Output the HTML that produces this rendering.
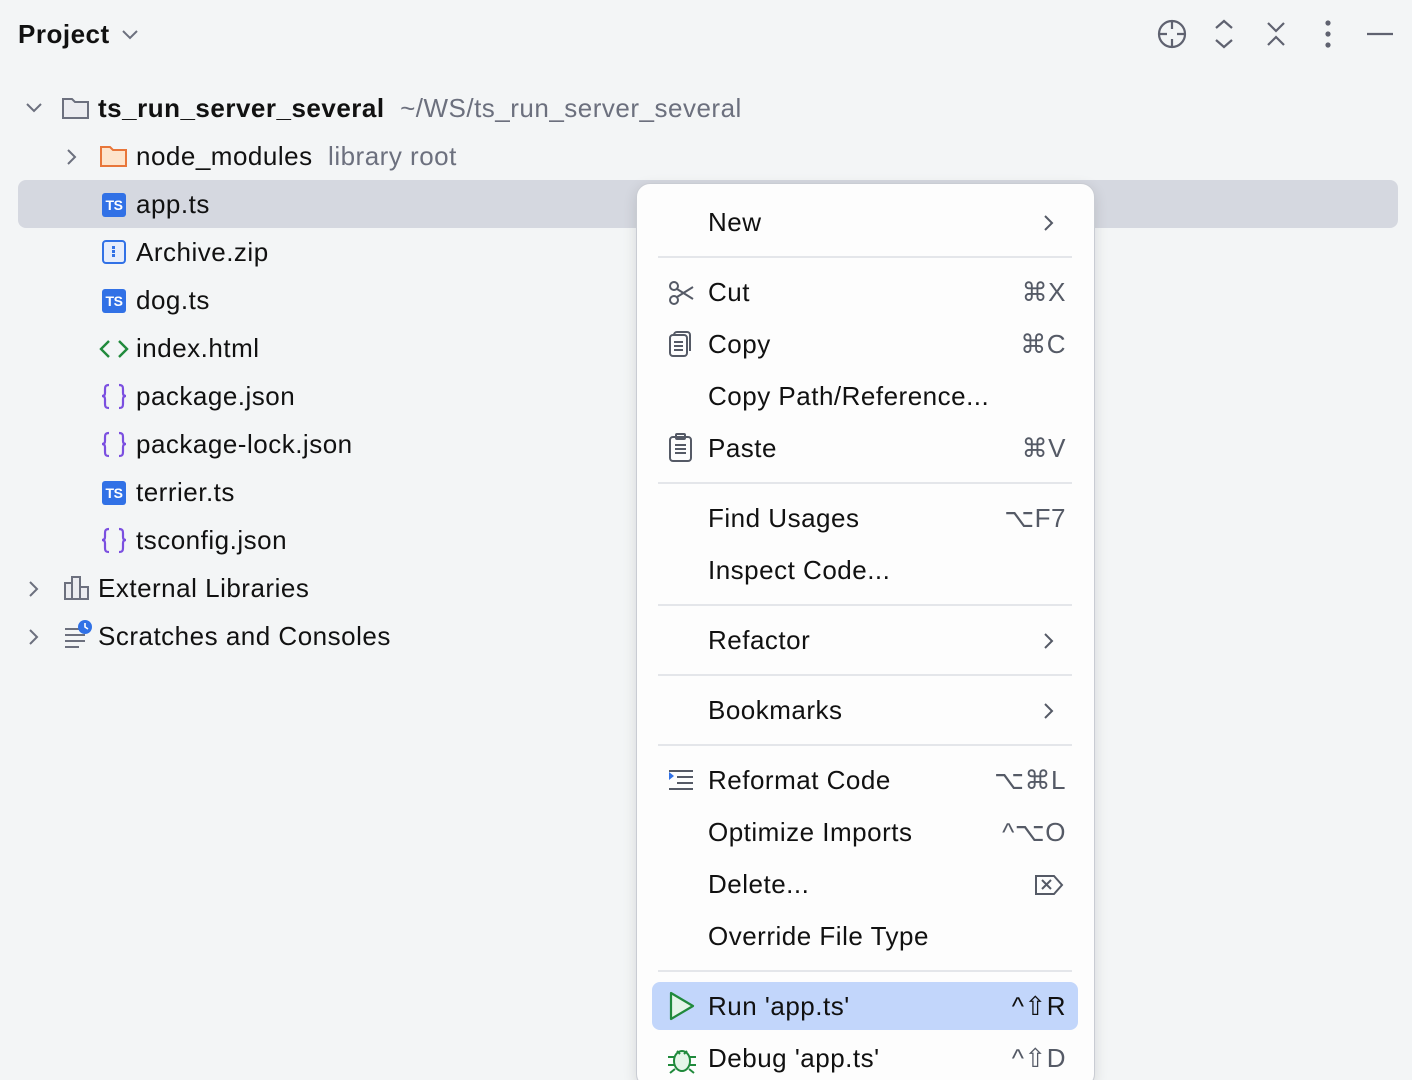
<!DOCTYPE html>
<html><head><meta charset="utf-8"><style>
*{margin:0;padding:0;box-sizing:border-box}
html,body{width:1412px;height:1080px;overflow:hidden}
body{background:#f3f5f6;font-family:"Liberation Sans",sans-serif;color:#111;position:relative;font-size:26px;letter-spacing:0.5px}
.a{position:absolute;white-space:nowrap}
.t{line-height:48px;height:48px}
.g{color:#6c707e}
.ts{position:absolute;width:24px;height:24px;background:#3171e6;border-radius:3px;color:#fff;font-size:14px;font-weight:bold;text-align:center;line-height:25px;letter-spacing:-0.5px}
.m{position:absolute;left:636px;top:183px;width:459px;height:905px;background:#fdfdfd;border:1px solid #c9ccd3;border-radius:14px;box-shadow:0 4px 14px rgba(0,0,0,.12)}
.mi{position:absolute;left:708px;line-height:52px;height:52px;white-space:nowrap}
.sc{position:absolute;right:346px;line-height:52px;color:#555a66;white-space:nowrap;text-align:right}
.sep{position:absolute;left:658px;width:414px;height:2px;background:#e4e6ea}
</style></head><body>
<div class="a" style="left:18px;top:14px;font-weight:bold;font-size:26px;line-height:40px">Project</div>
<svg class="a" style="left:120px;top:26px" width="20" height="16"><path d="M3 5l7 7 7-7" fill="none" stroke="#6c707e" stroke-width="2"/></svg>
<svg class="a" style="left:1150px;top:12px" width="250" height="46" fill="none" stroke="#5f6270" stroke-width="2.2">
<circle cx="22" cy="22" r="13"/><path d="M22 9v8M22 27v8M9 22h8M27 22h8"/>
<path d="M66 16l8-7 8 7M66 28l8 7 8-7"/>
<path d="M118 11l8 8 8-8M118 33l8-8 8 8"/>
<circle cx="178" cy="11" r="1.5" fill="#5f6270"/><circle cx="178" cy="22" r="1.5" fill="#5f6270"/><circle cx="178" cy="33" r="1.5" fill="#5f6270"/>
<path d="M217 22h26"/>
</svg>
<div class="a" style="left:18px;top:180px;width:1380px;height:48px;background:#d5d8e0;border-radius:8px"></div>
<svg class="a" style="left:22px;top:98px" width="24" height="20"><path d="M5 6l7 7 7-7" fill="none" stroke="#6c707e" stroke-width="2"/></svg>
<svg class="a" style="left:61px;top:95px" width="30" height="26"><path d="M2 4h9l3 3h13v16H2z" fill="#ebecf0" stroke="#6c707e" stroke-width="2"/></svg>
<div class="a t" style="left:98px;top:84px"><b>ts_run_server_several</b> <span class="g">&nbsp;~/WS/ts_run_server_several</span></div>
<svg class="a" style="left:62px;top:146px" width="20" height="22"><path d="M6 4l7 7-7 7" fill="none" stroke="#6c707e" stroke-width="2"/></svg>
<svg class="a" style="left:99px;top:143px" width="30" height="26"><path d="M2 4h9l3 3h13v16H2z" fill="#fde4cc" stroke="#e8763a" stroke-width="2"/></svg>
<div class="a t" style="left:136px;top:132px">node_modules <span class="g">&nbsp;library root</span></div>
<div class="ts" style="left:102px;top:193px">TS</div><div class="a t" style="left:136px;top:180px">app.ts</div>
<svg class="a" style="left:102px;top:240px" width="24" height="26"><rect x="1" y="1" width="22" height="22" rx="3" fill="#e6edfb" stroke="#3171e6" stroke-width="2"/><path d="M10 6h3v3h-3zM13 10h-3v3h3zM10 14h3v3h-3z" fill="#3171e6"/></svg>
<div class="a t" style="left:136px;top:228px">Archive.zip</div>
<div class="ts" style="left:102px;top:289px">TS</div><div class="a t" style="left:136px;top:276px">dog.ts</div>
<svg class="a" style="left:98px;top:338px" width="32" height="22"><path d="M11 3l-8 8 8 8M21 3l8 8-8 8" fill="none" stroke="#208a3c" stroke-width="2.4"/></svg>
<div class="a t" style="left:136px;top:324px">index.html</div>
<svg class="a" style="left:100px;top:383px" width="28" height="28" fill="none" stroke="#7b4fe0" stroke-width="2.2"><path d="M9 2c-4 0-4 2-4 5v3c0 2-1 3-3 3 2 0 3 1 3 3v4c0 3 0 5 4 5M19 2c4 0 4 2 4 5v3c0 2 1 3 3 3-2 0-3 1-3 3v4c0 3 0 5-4 5"/></svg>
<div class="a t" style="left:136px;top:372px">package.json</div>
<svg class="a" style="left:100px;top:431px" width="28" height="28" fill="none" stroke="#7b4fe0" stroke-width="2.2"><path d="M9 2c-4 0-4 2-4 5v3c0 2-1 3-3 3 2 0 3 1 3 3v4c0 3 0 5 4 5M19 2c4 0 4 2 4 5v3c0 2 1 3 3 3-2 0-3 1-3 3v4c0 3 0 5-4 5"/></svg>
<div class="a t" style="left:136px;top:420px">package-lock.json</div>
<div class="ts" style="left:102px;top:481px">TS</div><div class="a t" style="left:136px;top:468px">terrier.ts</div>
<svg class="a" style="left:100px;top:527px" width="28" height="28" fill="none" stroke="#7b4fe0" stroke-width="2.2"><path d="M9 2c-4 0-4 2-4 5v3c0 2-1 3-3 3 2 0 3 1 3 3v4c0 3 0 5 4 5M19 2c4 0 4 2 4 5v3c0 2 1 3 3 3-2 0-3 1-3 3v4c0 3 0 5-4 5"/></svg>
<div class="a t" style="left:136px;top:516px">tsconfig.json</div>
<svg class="a" style="left:24px;top:578px" width="20" height="22"><path d="M6 4l7 7-7 7" fill="none" stroke="#6c707e" stroke-width="2"/></svg>
<svg class="a" style="left:63px;top:575px" width="28" height="26" fill="#ebecf0" stroke="#6c707e" stroke-width="2"><rect x="2" y="8" width="7" height="16"/><rect x="9" y="2" width="8" height="22"/><rect x="17" y="12" width="8" height="12"/></svg>
<div class="a t" style="left:98px;top:564px">External Libraries</div>
<svg class="a" style="left:24px;top:626px" width="20" height="22"><path d="M6 4l7 7-7 7" fill="none" stroke="#6c707e" stroke-width="2"/></svg>
<svg class="a" style="left:63px;top:619px" width="32" height="30"><path d="M2 10h14M2 16h20M2 22h20M2 28h14" stroke="#6c707e" stroke-width="2"/><circle cx="22" cy="8" r="7" fill="#3171e6"/><path d="M22 4v4l3 2" stroke="#fff" stroke-width="1.6" fill="none"/></svg>
<div class="a t" style="left:98px;top:612px">Scratches and Consoles</div>

<div class="m"></div>
<div class="a" style="left:652px;top:982px;width:426px;height:48px;background:#c2d6fb;border-radius:8px"></div>
<div class="mi" style="top:196px">New</div>
<svg class="a" style="left:1040px;top:212px" width="16" height="22"><path d="M5 4l7 7-7 7" fill="none" stroke="#555a66" stroke-width="2"/></svg>
<div class="sep" style="top:256px"></div>
<svg class="a" style="left:668px;top:280px" width="28" height="26" fill="none" stroke="#555a66" stroke-width="2"><circle cx="6" cy="6" r="4"/><circle cx="6" cy="20" r="4"/><path d="M9 9l16 10M9 17l16-10"/></svg>
<div class="mi" style="top:266px">Cut</div><div class="sc" style="top:266px">⌘X</div>
<svg class="a" style="left:668px;top:331px" width="26" height="28" fill="none" stroke="#555a66" stroke-width="2"><rect x="2" y="4" width="17" height="21" rx="3"/><path d="M6 4a3 3 0 0 1 3-3h10a3 3 0 0 1 3 3v16"/><path d="M6 11h9M6 15h9M6 19h9"/></svg>
<div class="mi" style="top:318px">Copy</div><div class="sc" style="top:318px">⌘C</div>
<div class="mi" style="top:370px">Copy Path/Reference...</div>
<svg class="a" style="left:668px;top:433px" width="26" height="30" fill="none" stroke="#555a66" stroke-width="2"><rect x="2" y="4" width="21" height="24" rx="3"/><rect x="8" y="1" width="9" height="5" rx="1"/><path d="M7 12h11M7 16h11M7 20h11"/></svg>
<div class="mi" style="top:422px">Paste</div><div class="sc" style="top:422px">⌘V</div>
<div class="sep" style="top:482px"></div>
<div class="mi" style="top:492px">Find Usages</div><div class="sc" style="top:492px">⌥F7</div>
<div class="mi" style="top:544px">Inspect Code...</div>
<div class="sep" style="top:604px"></div>
<div class="mi" style="top:614px">Refactor</div>
<svg class="a" style="left:1040px;top:630px" width="16" height="22"><path d="M5 4l7 7-7 7" fill="none" stroke="#555a66" stroke-width="2"/></svg>
<div class="sep" style="top:674px"></div>
<div class="mi" style="top:684px">Bookmarks</div>
<svg class="a" style="left:1040px;top:700px" width="16" height="22"><path d="M5 4l7 7-7 7" fill="none" stroke="#555a66" stroke-width="2"/></svg>
<div class="sep" style="top:744px"></div>
<svg class="a" style="left:668px;top:769px" width="28" height="22"><path d="M1 3l5 4-5 4z" fill="#3171e6"/><path d="M1 2h24M9 8h16M9 14h16M1 20h24" stroke="#555a66" stroke-width="2"/></svg>
<div class="mi" style="top:754px">Reformat Code</div><div class="sc" style="top:754px">⌥⌘L</div>
<div class="mi" style="top:806px">Optimize Imports</div><div class="sc" style="top:806px">^⌥O</div>
<div class="mi" style="top:858px">Delete...</div>
<svg class="a" style="left:1034px;top:874px" width="30" height="22" fill="none" stroke="#555a66" stroke-width="2"><path d="M2 2h18l8 9-8 9H2z"/><path d="M8 6l9 9M17 6l-9 9"/></svg>
<div class="mi" style="top:910px">Override File Type</div>
<div class="sep" style="top:970px"></div>
<svg class="a" style="left:668px;top:991px" width="28" height="30"><path d="M3 2l22 13L3 28z" fill="#e5f5e8" stroke="#208a3c" stroke-width="2.2" stroke-linejoin="round"/></svg>
<div class="mi" style="top:980px">Run 'app.ts'</div><div class="sc" style="top:980px;color:#111">^⇧R</div>
<svg class="a" style="left:666px;top:1043px" width="32" height="32" fill="none" stroke="#208a3c" stroke-width="2"><ellipse cx="16" cy="18" rx="8" ry="10" fill="#e5f5e8"/><path d="M11 8l3 3M21 8l-3 3M2 14h6M24 14h6M2 22h6M24 22h6M4 30l5-4M28 30l-5-4"/></svg>
<div class="mi" style="top:1032px">Debug 'app.ts'</div><div class="sc" style="top:1032px">^⇧D</div>
</body></html>
